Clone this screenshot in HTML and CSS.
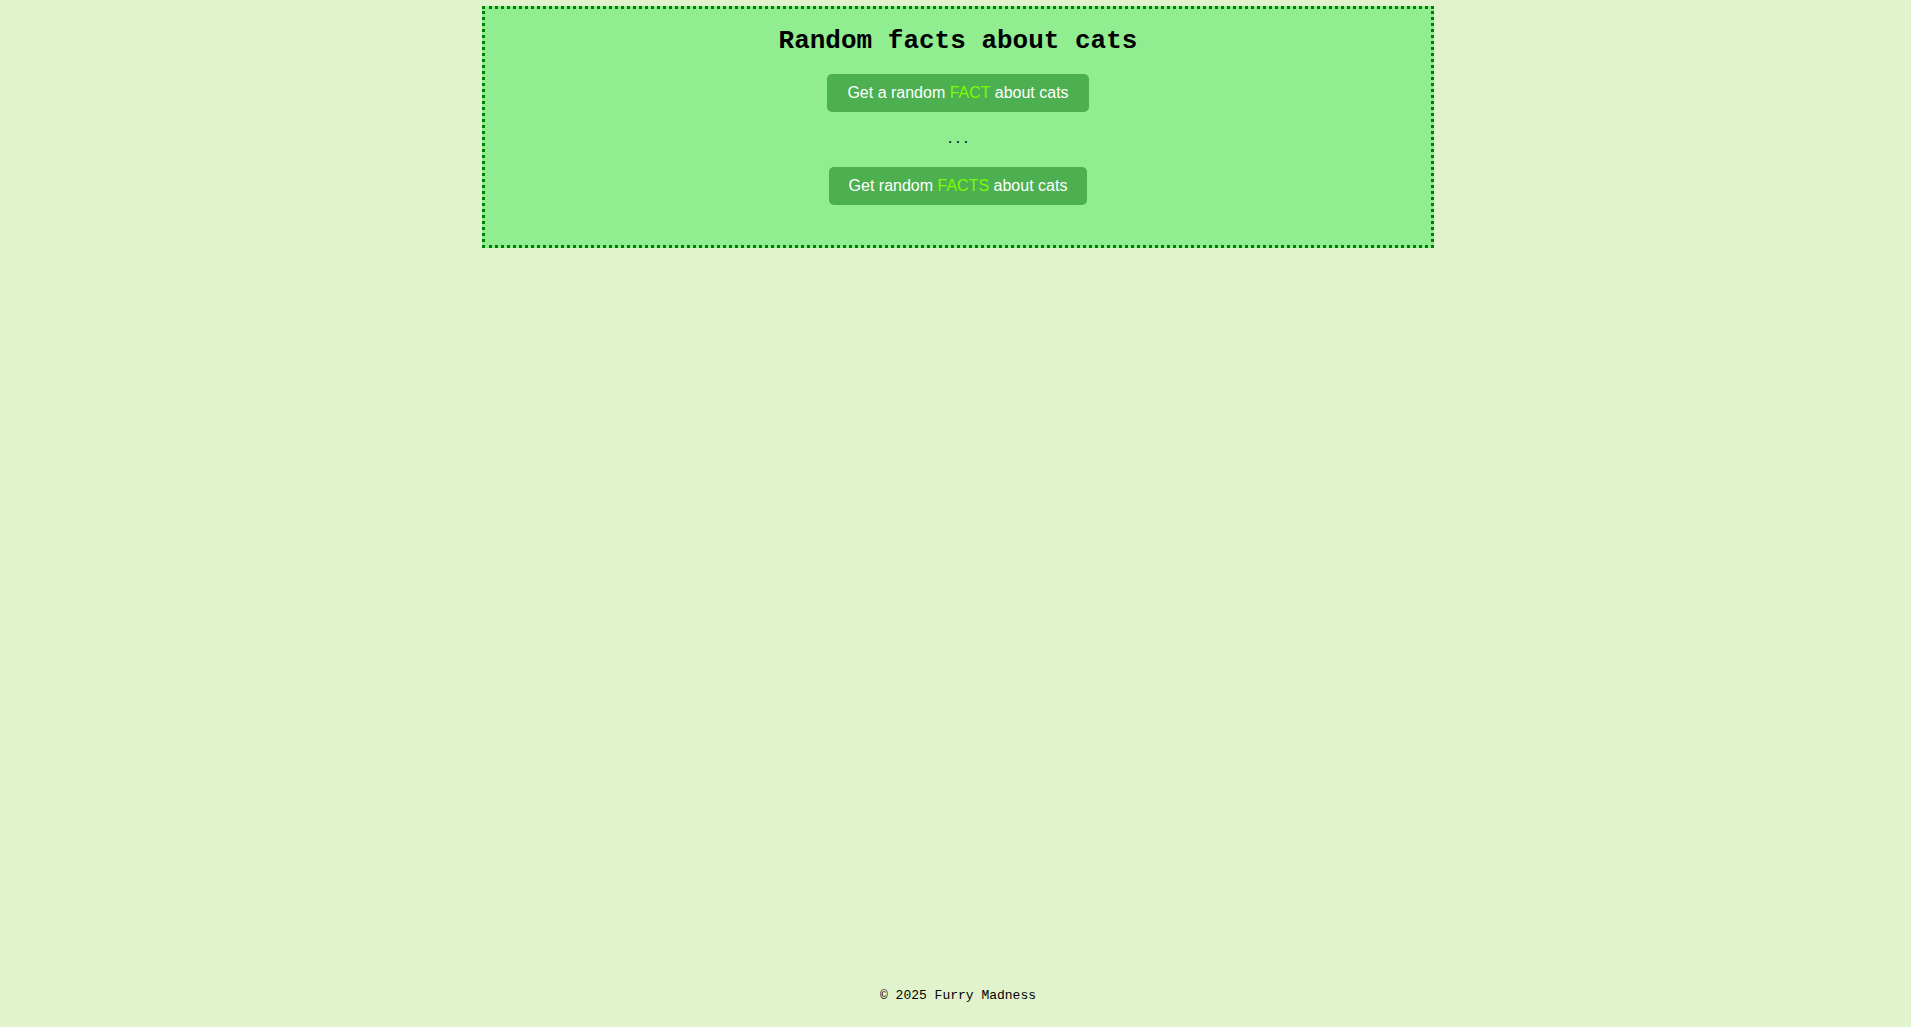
FILE: index.html
```html
<!DOCTYPE html>
<html lang="en">
<head>
<meta charset="utf-8">
<title>Random facts about cats</title>
<link rel="stylesheet" href="styles.css">
</head>
<body>
<main class="card">
  <h1 class="title">Random facts about cats</h1>
  <button class="btn">Get a random <span class="hl">FACT</span> about cats</button>
  <p class="fact">...</p>
  <button class="btn">Get random <span class="hl">FACTS</span> about cats</button>
</main>
<footer class="footer">© 2025 Furry Madness</footer>
</body>
</html>
```
FILE: styles.css
```css
html, body {
  margin: 0;
  height: 100%;
}
body {
  background: #e0f3cc;
  font-family: "Liberation Mono", "Courier New", monospace;
  font-size: 13px;
  line-height: 15px;
  color: #000;
  display: flex;
  flex-direction: column;
  align-items: center;
  padding-left: 5px;
  box-sizing: border-box;
}
.card {
  width: 946px;
  margin-top: 6px;
  border: 3px dotted #008000;
  background: #90ee90;
  display: flex;
  flex-direction: column;
  align-items: center;
  padding: 17px 0 40px;
}
.title {
  margin: 0 0 18px;
  font-family: "Liberation Mono", "Courier New", monospace;
  font-size: 26px;
  line-height: 30px;
  font-weight: bold;
}
.btn {
  font-family: "Liberation Sans", Arial, sans-serif;
  font-size: 16px;
  line-height: 18px;
  color: #fff;
  background: #4caf50;
  border: none;
  border-radius: 5px;
  padding: 10px 20px;
  cursor: pointer;
}
.hl {
  color: #7cfc00;
}
.fact {
  margin: 20px 0;
}
.footer {
  margin-top: auto;
  padding-bottom: 24px;
  text-align: center;
}
```
